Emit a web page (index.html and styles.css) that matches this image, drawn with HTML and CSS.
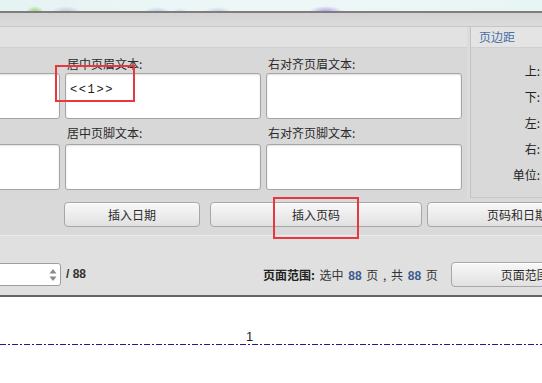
FILE: index.html
```html
<!DOCTYPE html>
<html lang="zh">
<head>
<meta charset="utf-8">
<title>页眉页脚</title>
<link rel="stylesheet" href="styles.css">
</head>
<body>
<div class="desk"></div>
<div class="win">
  <div class="bar"></div>
  <div class="main">
    <section class="hf">
      <div class="hf-head"></div>
      <div class="grid">
        <div class="cell"><label class="lbl"></label><div class="ta"></div></div>
        <div class="cell"><label class="lbl">居中页眉文本:</label><div class="ta"><span class="code">&lt;&lt;1&gt;&gt;</span></div></div>
        <div class="cell"><label class="lbl">右对齐页眉文本:</label><div class="ta"></div></div>
        <div class="cell foot"><label class="lbl"></label><div class="ta"></div></div>
        <div class="cell foot"><label class="lbl">居中页脚文本:</label><div class="ta"></div></div>
        <div class="cell foot"><label class="lbl">右对齐页脚文本:</label><div class="ta"></div></div>
      </div>
    </section>
    <section class="margins">
      <div class="m-head">页边距</div>
      <div class="m-body">
        <div class="m-lbl">上:</div>
        <div class="m-lbl">下:</div>
        <div class="m-lbl">左:</div>
        <div class="m-lbl">右:</div>
        <div class="m-lbl m-unit">单位:</div>
      </div>
    </section>
  </div>
  <div class="btnrow">
    <div class="btn btn-date">插入日期</div>
    <div class="btn btn-page">插入页码</div>
    <div class="btn btn-both">页码和日期</div>
  </div>
  <div class="lower">
    <div class="spin">
      <svg width="8" height="14" viewBox="0 0 8 14"><path d="M4 1 L7.5 5.5 H0.5 Z" fill="#8a8a8a"/><path d="M4 13 L7.5 8.5 H0.5 Z" fill="#8a8a8a"/></svg>
    </div>
    <div class="total">/ 88</div>
    <div class="range"><b>页面范围:</b> 选中 <span class="n">88</span> 页 , 共 <span class="n">88</span> 页</div>
    <div class="btn btn-range">页面范围</div>
  </div>
</div>
<div class="page">
  <div class="num">1</div>
  <div class="rule"></div>
</div>
<div class="mark mark-1"></div>
<div class="mark mark-2"></div>
</body>
</html>
```

FILE: styles.css
```css
* { box-sizing: border-box; }
html, body { margin: 0; padding: 0; }
body {
  width: 542px;
  height: 383px;
  overflow: hidden;
  position: relative;
  background: #fff;
  color: #333;
  font: 12px "Noto Sans CJK SC", "Liberation Sans", sans-serif;
}

.desk {
  height: 11px;
  background:
    radial-gradient(ellipse 9px 6px at 35px 12px, rgba(140,205,90,.95), rgba(140,205,90,0)),
    radial-gradient(ellipse 15px 6px at 66px 12px, rgba(185,195,210,.9), rgba(185,195,210,0)),
    radial-gradient(ellipse 13px 5px at 157px 12px, rgba(160,195,230,.8), rgba(160,195,230,0)),
    radial-gradient(ellipse 8px 4px at 180px 12px, rgba(175,205,225,.6), rgba(175,205,225,0)),
    radial-gradient(ellipse 14px 5px at 218px 12px, rgba(180,195,220,.8), rgba(180,195,220,0)),
    radial-gradient(ellipse 17px 6px at 326px 12px, rgba(170,145,225,.95), rgba(170,145,225,0)),
    linear-gradient(90deg, #e6f3f3, #eef7f7 50%, #e8f5f5);
}

.win {
  border-top: 2px solid #7e7e7e;
  border-bottom: 2px solid #656565;
  background: #dcdcdc;
}

.bar {
  height: 14px;
  background: linear-gradient(#d3d3d3, #dbdbdb);
  border-bottom: 1px solid #c7c7c7;
}

.main {
  display: flex;
  height: 171px;
}

.hf {
  width: 467px;
  flex: none;
  background: #d8d8d8;
  overflow: hidden;
}

.hf-head {
  height: 21px;
  background: #e2e2e2;
  border-bottom: 1px solid #d0d0d0;
}

.grid {
  display: grid;
  grid-template-columns: 196px 196px 196px;
  column-gap: 5px;
  row-gap: 6px;
  margin-left: -136px;
  padding-top: 8px;
}

.lbl {
  display: block;
  height: 16px;
  line-height: 16px;
  padding-left: 2px;
  white-space: nowrap;
  color: #2a2a2a;
}

.ta {
  height: 46px;
  margin-top: 1px;
  background: #fff;
  border: 1px solid #a4a4a4;
  border-radius: 3px;
  box-shadow: inset 0 1px 2px rgba(0,0,0,.12);
  padding: 5px 4px 0;
}

.foot .ta { margin-top: 3px; }

.code {
  font: 12px/14px "Liberation Mono", "DejaVu Sans Mono", monospace;
  letter-spacing: 1.6px;
  color: #222;
}

.margins {
  flex: 1;
  margin-left: 3px;
  border-left: 1px solid #c2c2c2;
  border-bottom: 1px solid #c9c9c9;
  background: #d9d9d9;
}

.m-head {
  height: 21px;
  line-height: 20px;
  padding-left: 8px;
  background: #e4e4e4;
  border-bottom: 1px solid #d0d0d0;
  color: #4a6fa5;
  white-space: nowrap;
}

.m-body {
  padding: 15px 2px 0 0;
  text-align: right;
}

.m-lbl {
  height: 16px;
  line-height: 16px;
  margin-bottom: 10px;
  color: #222;
  white-space: nowrap;
}

.m-unit { margin-top: 5px; }

.btnrow {
  display: flex;
  height: 37px;
  padding: 4px 0 0 64px;
  background: #d9d9d9;
  overflow: hidden;
}

.btn {
  flex: none;
  height: 25px;
  line-height: 23px;
  text-align: center;
  white-space: nowrap;
  color: #2a2a2a;
  border: 1px solid #a7a7a7;
  border-radius: 4px;
  background: linear-gradient(#f8f8f8, #e1e1e1);
  box-shadow: inset 0 1px 0 #fff;
}

.btn-date { width: 136px; margin-right: 10px; }
.btn-page { width: 212px; margin-right: 5px; }
.btn-both { width: 180px; }

.lower {
  display: flex;
  align-items: flex-start;
  height: 60px;
  padding-top: 26px;
  border-top: 1px solid #ececec;
  background: #e0e0e0;
  overflow: hidden;
}

.spin {
  flex: none;
  width: 101px;
  height: 23px;
  margin-left: -40px;
  margin-top: 1px;
  display: flex;
  align-items: center;
  justify-content: flex-end;
  padding-right: 3px;
  background: #fff;
  border: 1px solid #9e9e9e;
  border-radius: 3px;
}

.total {
  flex: 0 0 197px;
  margin-left: 5px;
  font: bold 12px/25px "Liberation Sans", sans-serif;
  color: #333;
}

.range {
  flex: 0 0 172px;
  line-height: 25px;
  white-space: nowrap;
  word-spacing: 2px;
  color: #333;
}

.range b { font-weight: bold; color: #222; }

.n {
  font: bold 12px "Liberation Sans", sans-serif;
  color: #3b5b8c;
}

.btn-range { width: 148px; margin-left: 13px; }

.page {
  background: #fff;
  padding-top: 32px;
}

.num {
  padding-left: 246px;
  font: 13px/15px "Liberation Sans", sans-serif;
  color: #222;
}

.rule {
  height: 1px;
  background: repeating-linear-gradient(90deg,
    #1e1e8c 0 6px, transparent 6px 8px,
    #1e1e8c 8px 10px, transparent 10px 12px);
}

.mark {
  position: absolute;
  border: 2px solid #e8383d;
}

.mark-1 { left: 55px; top: 65px; width: 80px; height: 37px; }
.mark-2 { left: 273px; top: 197px; width: 86px; height: 42px; }
```
